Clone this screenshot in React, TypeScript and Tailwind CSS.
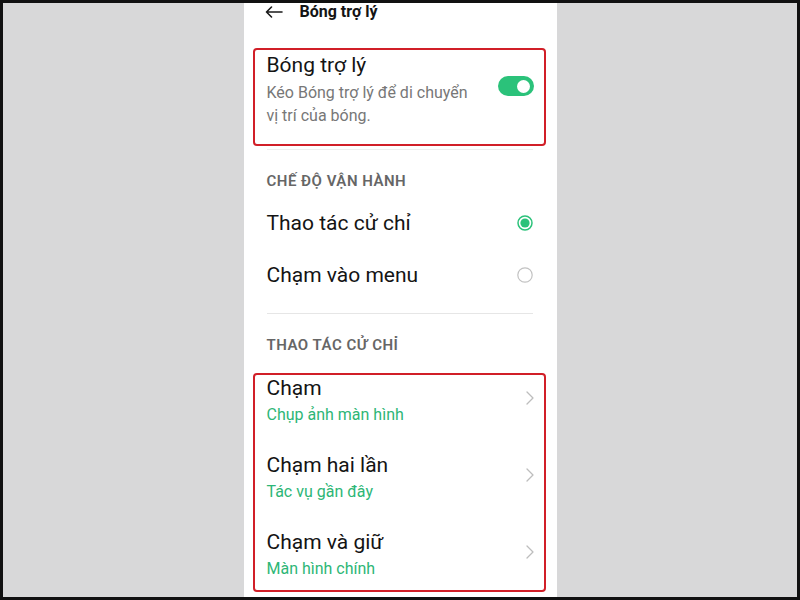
import React from "react";

const font = { fontFamily: "Roboto, 'Noto Sans', 'Liberation Sans', sans-serif" };

function Chevron() {
  return (
    <svg width="8" height="14" viewBox="0 0 8 14" fill="none">
      <path d="M1 1 L7 7 L1 13" stroke="#bdbdbd" strokeWidth="1.3" strokeLinecap="round" strokeLinejoin="round" />
    </svg>
  );
}

function Radio({ on }: { on: boolean }) {
  return on ? (
    <svg width="16" height="16" viewBox="0 0 16 16">
      <circle cx="8" cy="8" r="7" fill="none" stroke="#2bc27a" strokeWidth="1.5" />
      <circle cx="8" cy="8" r="4.6" fill="#2bc27a" />
    </svg>
  ) : (
    <svg width="16" height="16" viewBox="0 0 16 16">
      <circle cx="8" cy="8" r="7.2" fill="none" stroke="#c2c2c2" strokeWidth="1.2" />
    </svg>
  );
}

function GestureRow({ title, sub, last }: { title: string; sub: string; last?: boolean }) {
  return (
    <div className={`flex justify-between items-start ${last ? "h-[61px]" : "h-[77px]"}`}>
      <div className="flex flex-col">
        <div className="text-[21px] leading-[26px] text-[#141414]">{title}</div>
        <div className="mt-[3px] text-[16px] leading-[22px] text-[#2db676]">{sub}</div>
      </div>
      <div className="mt-[16px]">
        <Chevron />
      </div>
    </div>
  );
}

export default function App() {
  return (
    <div className="w-[800px] h-[600px] bg-[#111111] p-[3px]" style={font}>
      <div className="w-full h-full bg-[#d8d8d9] flex justify-center overflow-hidden">
        <div className="w-[313px] h-full bg-white pl-[9px] pr-[11px] flex flex-col">
          {/* header */}
          <div className="flex items-center pt-[1px] h-[17px]">
            <svg className="ml-[12px]" width="18" height="12" viewBox="0 0 18 12" fill="none">
              <path d="M17 6 H1.5 M6.5 1 L1.5 6 L6.5 11" stroke="#1a1a1a" strokeWidth="1.6" strokeLinecap="round" strokeLinejoin="round" />
            </svg>
            <div className="ml-[17px] text-[16px] leading-[16px] font-bold text-[#141414]">Bóng trợ lý</div>
          </div>

          {/* box 1 */}
          <div className="mt-[28px] h-[98px] border-2 border-[#d11f28] rounded-[4px] pl-[12px] pr-[10px] pt-[1px] flex justify-between items-start">
            <div className="flex flex-col">
              <div className="text-[21px] leading-[28px] text-[#141414]">Bóng trợ lý</div>
              <div className="mt-[2px] text-[16px] leading-[23px] text-[#777777]">
                Kéo Bóng trợ lý để di chuyển
                <br />
                vị trí của bóng.
              </div>
            </div>
            <div className="mt-[25px] w-[36px] h-[20px] rounded-full bg-[#2bc27a] flex items-center justify-end pr-[4px]">
              <div className="w-[13px] h-[13px] rounded-full bg-white" />
            </div>
          </div>

          <div className="pl-[14px] pr-[13px] flex flex-col">
            <div className="mt-[3px] h-px bg-[#eeeeee]" />
            <div className="mt-[21px] text-[15px] leading-[20px] font-semibold tracking-[0.5px] text-[#666666]">CHẾ ĐỘ VẬN HÀNH</div>
            <div className="mt-[19px] flex justify-between items-center">
              <div className="text-[21px] leading-[26px] text-[#141414]">Thao tác cử chỉ</div>
              <Radio on />
            </div>
            <div className="mt-[26px] flex justify-between items-center">
              <div className="text-[21px] leading-[26px] text-[#141414]">Chạm vào menu</div>
              <Radio on={false} />
            </div>
            <div className="mt-[25px] h-px bg-[#e6e6e6]" />
            <div className="mt-[21px] text-[15px] leading-[20px] font-semibold tracking-[0.5px] text-[#666666]">THAO TÁC CỬ CHỈ</div>
          </div>

          {/* box 2 */}
          <div className="mt-[18px] h-[219px] border-2 border-[#d11f28] rounded-[4px] pl-[12px] pr-[10px] flex flex-col">
            <GestureRow title="Chạm" sub="Chụp ảnh màn hình" />
            <GestureRow title="Chạm hai lần" sub="Tác vụ gần đây" />
            <GestureRow title="Chạm và giữ" sub="Màn hình chính" last />
          </div>
        </div>
      </div>
    </div>
  );
}
